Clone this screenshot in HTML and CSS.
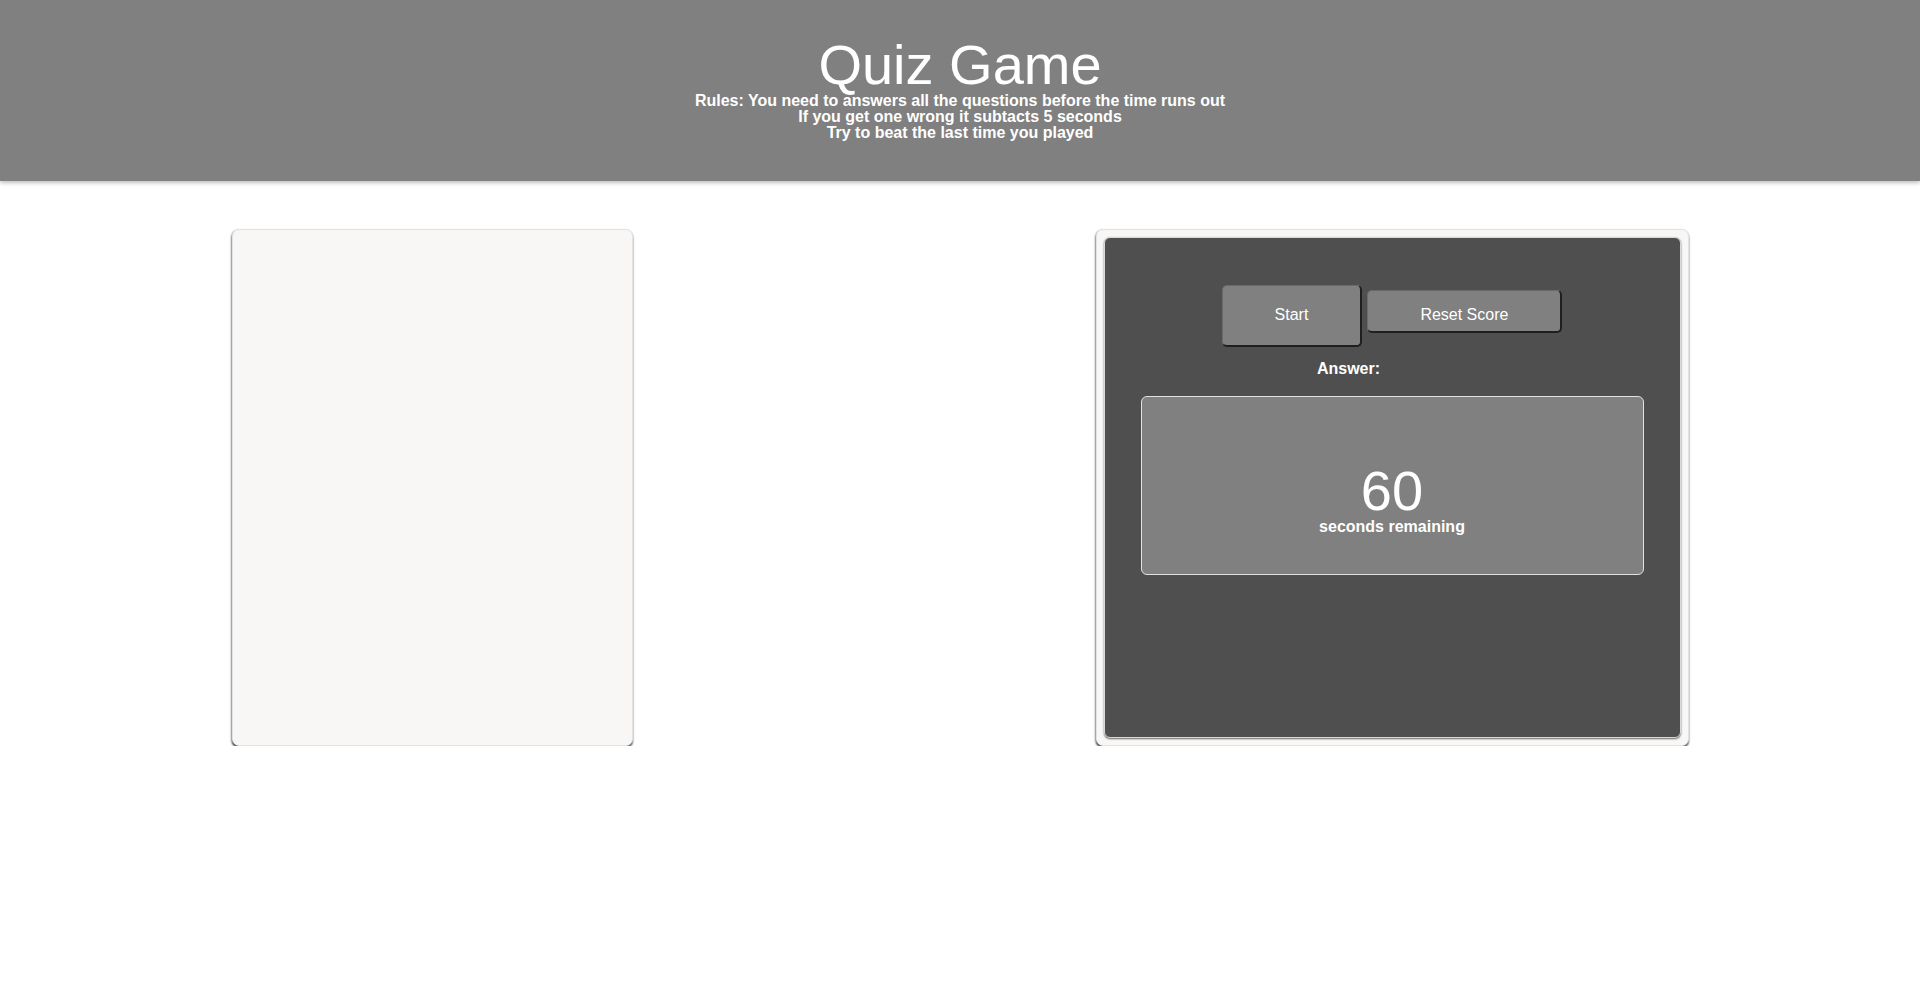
FILE: index.html
```html
<!DOCTYPE html>
<html lang="en">
<head>
<meta charset="utf-8">
<title>Quiz Game</title>
<link rel="stylesheet" href="styles.css">
</head>
<body>
<header class="site-header">
  <h1 class="title">Quiz Game</h1>
  <p class="rules">Rules: You need to answers all the questions before the time runs out</p>
  <p class="rules">If you get one wrong it subtacts 5 seconds</p>
  <p class="rules">Try to beat the last time you played</p>
</header>
<main class="board">
  <section class="card question-card"></section>
  <section class="card control-card">
    <div class="panel">
      <div class="button-row">
        <button class="btn btn-start" type="button">Start</button>
        <button class="btn btn-reset" type="button">Reset Score</button>
      </div>
      <div class="answer-row">
        <span class="answer-label">Answer:</span>
        <span class="answer-value"></span>
      </div>
      <div class="timer">
        <div class="timer-count">60</div>
        <div class="timer-label">seconds remaining</div>
      </div>
    </div>
  </section>
</main>
</body>
</html>
```
FILE: styles.css
```css
* {
  box-sizing: border-box;
}

html, body {
  margin: 0;
  padding: 0;
  background: #ffffff;
  font-family: "Liberation Sans", Arial, Helvetica, sans-serif;
  color: #ffffff;
}

.site-header {
  height: 181px;
  background: #808080;
  padding-top: 37px;
  text-align: center;
  box-shadow: 0 2px 4px rgba(0, 0, 0, 0.25);
  position: relative;
  z-index: 1;
}

.title {
  margin: 0;
  font-size: 56px;
  font-weight: normal;
  line-height: 56px;
}

.rules {
  margin: 0;
  font-size: 16px;
  font-weight: bold;
  line-height: 16px;
}

.board {
  display: flex;
  justify-content: space-around;
  align-items: flex-start;
  margin-top: 48px;
}

.card {
  height: 517px;
  background: #f8f7f5;
  border: 1px solid #e2e2e2;
  border-radius: 7px;
  box-shadow: 0 2px 2px rgba(0, 0, 0, 0.6), -1px 1px 2px rgba(0, 0, 0, 0.3);
}

.question-card {
  width: 401px;
}

.control-card {
  width: 593px;
  padding: 7px;
}

.panel {
  height: 100%;
  background: #4f4f4f;
  border: 1px solid #d8d8d8;
  border-radius: 6px;
  box-shadow: 0 1px 2px rgba(0, 0, 0, 0.6);
  padding-top: 47px;
}

.button-row {
  display: flex;
  justify-content: center;
  align-items: baseline;
  gap: 5px;
}

.btn {
  font-family: "Liberation Sans", Arial, Helvetica, sans-serif;
  font-size: 16px;
  line-height: 18px;
  color: #ffffff;
  background: #808080;
  border-style: solid;
  border-width: 1px 2px 2px 1px;
  border-color: #6a6a6a #1f1f1f #1f1f1f #6a6a6a;
  border-radius: 5px;
  padding-left: 52px;
  padding-right: 52px;
  margin: 0;
}

.btn-start {
  padding-top: 20px;
  padding-bottom: 21px;
}

.btn-reset {
  padding-top: 15px;
  padding-bottom: 7px;
}

.answer-row {
  display: flex;
  justify-content: center;
  margin-top: 14px;
  font-size: 16px;
  font-weight: bold;
  line-height: 16px;
}

.answer-value {
  width: 87px;
}

.timer {
  width: 503px;
  height: 179px;
  margin: 19px auto 0;
  background: #808080;
  border: 1px solid #e2e2e2;
  border-radius: 6px;
  padding-top: 66px;
  text-align: center;
}

.timer-count {
  font-size: 56px;
  line-height: 56px;
}

.timer-label {
  font-size: 16px;
  font-weight: bold;
  line-height: 16px;
}
```
